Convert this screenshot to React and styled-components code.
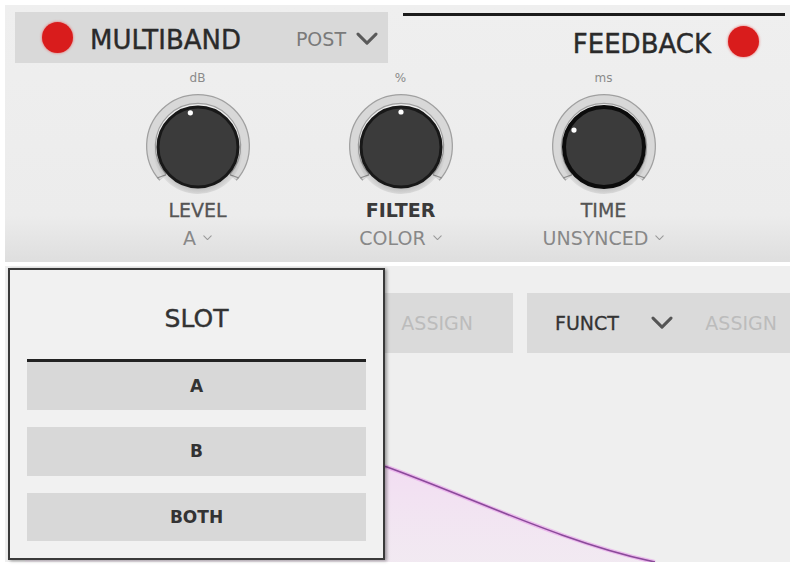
import React from 'react';
import styled, { createGlobalStyle } from 'styled-components';

const GlobalStyle = createGlobalStyle`
  body {
    margin: 0;
    background: #ffffff;
    font-family: "DejaVu Sans", "Liberation Sans", sans-serif;
  }
`

const Page = styled.div`
  position: relative;
  width: 793px;
  height: 565px;
  box-sizing: border-box;
  padding: 5px 3px 3px 5px;
  display: flex;
  flex-direction: column;
  gap: 4px;
  overflow: hidden;
`

const TopPanel = styled.section`
  height: 257px;
  flex-shrink: 0;
  background: linear-gradient(#efefef 0%, #ececec 82%, #dedede 100%);
  display: flex;
  flex-direction: column;
`

const HeaderRow = styled.div`
  display: flex;
  height: 58px;
  box-sizing: border-box;
  padding: 7px 5px 0 10px;
  gap: 15px;
`

const Multiband = styled.div`
  width: 373px;
  height: 51px;
  box-sizing: border-box;
  background: #d9d9d9;
  display: flex;
  align-items: center;
  padding: 0 10px 0 27px;
`

const Feedback = styled.div`
  flex: 1;
  height: 51px;
  margin-top: 1px;
  border-top: 3px solid #1b1b1b;
  display: flex;
  align-items: center;
  justify-content: flex-end;
  gap: 17px;
  padding-right: 26px;
`

const RedDot = styled.span`
  width: 31px;
  height: 31px;
  border-radius: 50%;
  background: #d91c1c;
  box-shadow: 0 0 2px 1px rgba(235, 90, 90, 0.45);
  flex-shrink: 0;
`

const Title = styled.span`
  font-size: 26px;
  color: #2a2a2a;
  -webkit-text-stroke: 0.4px #2a2a2a;
  padding-top: 4px;
  margin-left: ${p => (p.$left ? '17px' : '0')};
`

const Post = styled.span`
  margin-left: auto;
  padding-top: 3px;
  display: flex;
  align-items: center;
  gap: 10px;
  font-size: 19px;
  color: #7a7a7a;
`

const KnobRow = styled.div`
  display: flex;
  padding-left: 91px;
`

const KnobCol = styled.div`
  width: 203px;
  display: flex;
  flex-direction: column;
  align-items: center;
`

const Unit = styled.span`
  margin-top: 8px;
  font-size: 12px;
  line-height: 14px;
  color: #8a8a8a;
`

const KnobSvg = styled.svg`
  margin-top: 6px;
  display: block;
`

const KnobLabel = styled.span`
  margin-top: -1px;
  font-size: 19px;
  line-height: 20px;
  color: ${p => (p.$strong ? '#3a3a3a' : '#555')};
  font-weight: ${p => (p.$strong ? 700 : 400)};
  -webkit-text-stroke: ${p => (p.$strong ? '0' : '0.3px #555')};
`

const KnobSub = styled.span`
  margin-top: 8px;
  font-size: 19px;
  line-height: 20px;
  color: #888;
  display: flex;
  align-items: center;
  gap: 7px;
`

const BottomPanel = styled.section`
  flex: 1;
  background: #efefef;
  display: flex;
  flex-direction: column;
`

const Toolbar = styled.div`
  display: flex;
  margin-top: 27px;
  padding-left: 10px;
  gap: 14px;
  height: 60px;
`

const ToolBox = styled.div`
  width: ${p => p.$w}px;
  background: #dadada;
  display: flex;
  align-items: center;
  padding: 0 ${p => p.$pr}px 0 28px;
  box-sizing: border-box;
`

const Funct = styled.span`
  font-size: 19px;
  color: #333;
  -webkit-text-stroke: 0.3px #333;
`

const Assign = styled.span`
  margin-left: auto;
  font-size: 19px;
  color: #bcbcbc;
`

const ChevronSlot = styled.span`
  display: flex;
  margin-left: 32px;
`

const Graph = styled.svg`
  flex: 1;
  display: block;
`

const Popup = styled.div`
  position: absolute;
  left: 8px;
  top: 268px;
  width: 377px;
  height: 292px;
  box-sizing: border-box;
  border: 2px solid #3a3a3a;
  box-shadow: 2px 1px 3px rgba(0, 0, 0, 0.35);
  background: #f1f1f1;
  display: flex;
  flex-direction: column;
  padding: 0 17px 17px;
`

const PopupHead = styled.div`
  height: 89px;
  display: flex;
  align-items: center;
  justify-content: center;
  padding-top: 8px;
  box-sizing: border-box;
  font-size: 25px;
  color: #333;
  -webkit-text-stroke: 0.4px #333;
`

const Options = styled.div`
  flex: 1;
  display: flex;
  flex-direction: column;
  gap: 17px;
`

const Option = styled.div`
  flex: 1;
  background: #d8d8d8;
  border-top: ${p => (p.$selected ? '3px solid #222' : '0')};
  display: flex;
  align-items: center;
  justify-content: center;
  font-size: 17px;
  font-weight: 700;
  color: #333;
`

const Chevron = ({ size = 22, stroke = 3, color = '#555' }) => (
  <svg width={size} height={size * 0.6} viewBox="0 0 22 13">
    <polyline points="2,2 11,11 20,2" fill="none" stroke={color} strokeWidth={stroke} strokeLinecap="round" strokeLinejoin="round" />
  </svg>
)

const Knob = ({ angle, heavy }) => {
  const c = 55
  const pt = (r, a) => {
    const rad = (a - 90) * Math.PI / 180
    return [c + r * Math.cos(rad), c + r * Math.sin(rad)]
  }
  const arc = r => {
    const [x1, y1] = pt(r, -132)
    const [x2, y2] = pt(r, 132)
    return `M ${x1} ${y1} A ${r} ${r} 0 1 1 ${x2} ${y2}`
  }
  const [dx, dy] = pt(34, angle)
  const [t1x, t1y] = pt(43, -132)
  const [t2x, t2y] = pt(52, -128)
  const [t3x, t3y] = pt(43, 132)
  const [t4x, t4y] = pt(52, 128)
  return (
    <KnobSvg width="110" height="110" viewBox="0 0 110 110">
      <defs>
        <radialGradient id="kshadow" cx="50%" cy="55%" r="50%">
          <stop offset="70%" stopColor="rgba(0,0,0,0.25)" />
          <stop offset="100%" stopColor="rgba(0,0,0,0)" />
        </radialGradient>
      </defs>
      <path d={arc(47)} fill="none" stroke="#a0a0a0" strokeWidth="10" />
      <path d={arc(47)} fill="none" stroke="#d8d8d8" strokeWidth="7.5" />
      <line x1={t1x} y1={t1y} x2={t2x} y2={t2y} stroke="#8a8a8a" strokeWidth="1.2" />
      <line x1={t3x} y1={t3y} x2={t4x} y2={t4y} stroke="#8a8a8a" strokeWidth="1.2" />
      <circle cx={c} cy={c + 3} r="45" fill="url(#kshadow)" />
      <circle cx={c} cy={c + 1} r="40" fill="#3b3b3b" stroke={heavy ? '#0c0c0c' : '#181818'} strokeWidth={heavy ? 4 : 3} />
      <circle cx={dx} cy={dy} r="2.6" fill="#ffffff" />
    </KnobSvg>
  )
}

const knobs = [
  { unit: 'dB', label: 'LEVEL', sub: 'A', angle: -13 },
  { unit: '%', label: 'FILTER', sub: 'COLOR', angle: 0, strong: true },
  { unit: 'ms', label: 'TIME', sub: 'UNSYNCED', angle: -62, heavy: true },
]

const curve = 'M 20 20 C 150 50 300 92 382 114 C 470 146 560 190 650 209'

export default function App() {
  return (
    <>
      <GlobalStyle />
      <Page>
        <TopPanel>
          <HeaderRow>
            <Multiband>
              <RedDot />
              <Title $left>MULTIBAND</Title>
              <Post>
                POST
                <Chevron size={22} stroke={3} color="#5a5a5a" />
              </Post>
            </Multiband>
            <Feedback>
              <Title>FEEDBACK</Title>
              <RedDot />
            </Feedback>
          </HeaderRow>
          <KnobRow>
            {knobs.map(k => (
              <KnobCol key={k.label}>
                <Unit>{k.unit}</Unit>
                <Knob angle={k.angle} heavy={k.heavy} />
                <KnobLabel $strong={k.strong}>{k.label}</KnobLabel>
                <KnobSub>
                  {k.sub}
                  <Chevron size={9} stroke={2.6} color="#999" />
                </KnobSub>
              </KnobCol>
            ))}
          </KnobRow>
        </TopPanel>

        <BottomPanel>
          <Toolbar>
            <ToolBox $w={498} $pr={40}>
              <Assign>ASSIGN</Assign>
            </ToolBox>
            <ToolBox $w={263} $pr={13}>
              <Funct>FUNCT</Funct>
              <ChevronSlot>
                <Chevron size={22} stroke={3} color="#555" />
              </ChevronSlot>
              <Assign>ASSIGN</Assign>
            </ToolBox>
          </Toolbar>
          <Graph viewBox="0 0 785 209" preserveAspectRatio="none">
            <defs>
              <linearGradient id="fill" x1="0" y1="0" x2="0" y2="1">
                <stop offset="0%" stopColor="#f3c8f3" stopOpacity="0.9" />
                <stop offset="100%" stopColor="#f4e4f4" stopOpacity="0.5" />
              </linearGradient>
            </defs>
            <path d={`${curve} L 20 209 Z`} fill="url(#fill)" />
            <path d={curve} fill="none" stroke="#e79ae9" strokeWidth="4" opacity="0.6" />
            <path d={curve} fill="none" stroke="#8a4a9a" strokeWidth="1.6" />
          </Graph>
        </BottomPanel>

        <Popup>
          <PopupHead>SLOT</PopupHead>
          <Options>
            <Option $selected>A</Option>
            <Option>B</Option>
            <Option>BOTH</Option>
          </Options>
        </Popup>
      </Page>
    </>
  )
}
